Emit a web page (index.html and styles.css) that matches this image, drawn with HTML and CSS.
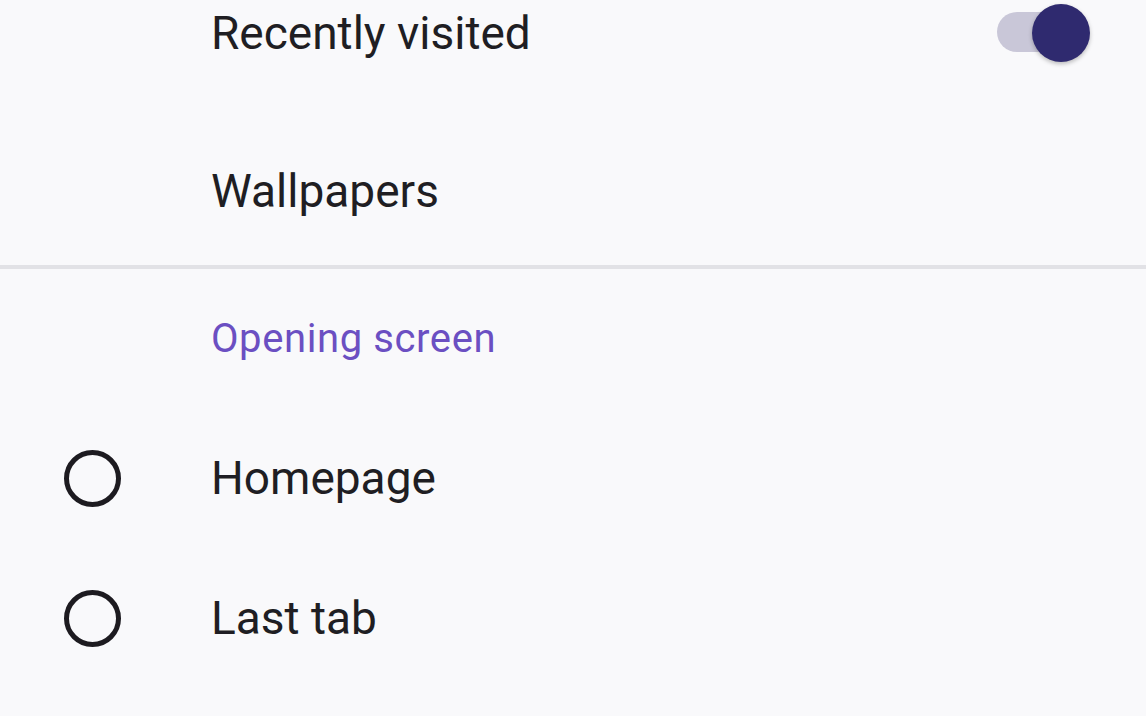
FILE: index.html
```html
<!DOCTYPE html>
<html>
<head>
<meta charset="utf-8">
<link rel="stylesheet" href="styles.css">
</head>
<body>
<div class="screen">
  <div class="row row-toggle">
    <span class="label">Recently visited</span>
    <span class="switch"><span class="track"></span><span class="thumb"></span></span>
  </div>
  <div class="row row-plain">
    <span class="label">Wallpapers</span>
  </div>
  <div class="divider"></div>
  <div class="section-title">Opening screen</div>
  <div class="row row-radio first">
    <span class="radio"></span>
    <span class="label">Homepage</span>
  </div>
  <div class="row row-radio">
    <span class="radio"></span>
    <span class="label">Last tab</span>
  </div>
</div>
</body>
</html>
```

FILE: styles.css
```css
html, body {
  margin: 0;
  padding: 0;
  background: #f9f9fb;
}
.screen {
  width: 1146px;
  height: 716px;
  overflow: hidden;
  font-family: Roboto, "Noto Sans", sans-serif;
  color: #1f1e23;
  display: flex;
  flex-direction: column;
}
.row {
  display: flex;
  align-items: center;
  padding-left: 211px;
  font-size: 46px;
  flex: none;
}
.label {
  line-height: 1;
}
.row-toggle {
  height: 66px;
  justify-content: space-between;
  padding-right: 56px;
}
.switch {
  position: relative;
  width: 93px;
  height: 58px;
  display: block;
}
.track {
  position: absolute;
  left: 0;
  top: 8px;
  width: 84px;
  height: 40px;
  border-radius: 20px;
  background: #c9c7d8;
}
.thumb {
  position: absolute;
  right: 0;
  top: 0;
  width: 58px;
  height: 58px;
  border-radius: 50%;
  background: #2f2a6f;
  box-shadow: 0 2px 4px rgba(0,0,0,0.25);
}
.row-plain {
  height: 110px;
  margin-top: 70px;
}
.divider {
  height: 4px;
  background: #e2e2e6;
  margin-top: 19px;
  flex: none;
}
.section-title {
  padding-left: 211px;
  font-size: 40px;
  letter-spacing: 0.6px;
  color: #6b4fc2;
  height: 138px;
  display: flex;
  align-items: center;
  flex: none;
}
.row-radio {
  padding-left: 64px;
  height: 140px;
}
.row-radio.first {
  margin-top: 1px;
}
.radio {
  width: 47px;
  height: 47px;
  border: 5px solid #1d1b20;
  border-radius: 50%;
  margin-right: 90px;
  flex: none;
}
```
